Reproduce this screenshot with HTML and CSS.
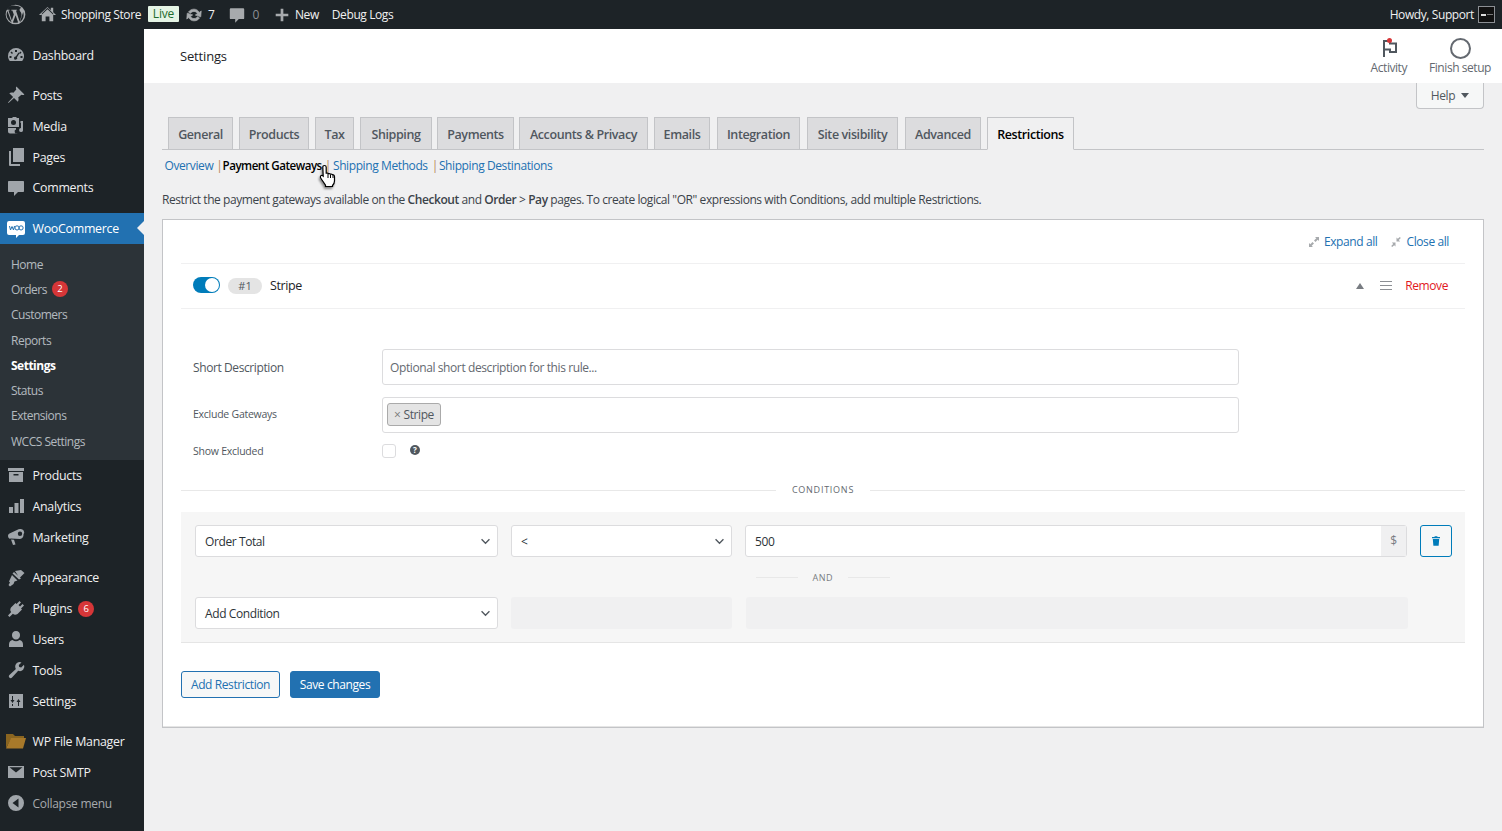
FILE: index.html
```html
<!DOCTYPE html>
<html lang="en">
<head>
<meta charset="utf-8">
<title>Settings</title>
<link rel="stylesheet" href="styles.css">
</head>
<body>
<header class="adminbar">
  <div class="bar-left">
    <svg class="bar-wp" viewBox="0 0 20 20"><path d="M10 .6a9.400 9.400 0 1 0 0 18.800A9.400 9.400 0 0 0 10 .6zm0 1a8.400 8.400 0 0 1 5.700 2.200c-1-.1-1.800.7-1.800 1.600 0 .9.500 1.500 1 2.300.4.700.8 1.500.8 2.700 0 .8-.3 1.800-.8 3.100l-1 3.200-3.500-10.500.9-.1c.5 0 .4-.7 0-.7l-2.600.1-2.500-.1c-.5 0-.5.700-.1.700l.9.100 1.400 3.700-1.900 5.700-3.200-9.400.9-.1c.5 0 .4-.7 0-.7l-2.400.1A8.400 8.400 0 0 1 10 1.600zM2.300 6.600l4 11A8.400 8.400 0 0 1 2.300 6.600zm7.800 4.200 2.400 6.700a8.400 8.400 0 0 1-5 .1zm7-3.700A8.400 8.400 0 0 1 14 17.400l2.500-7.300c.5-1.200.7-2.200.7-3z"/></svg>
    <svg class="bar-ic bar-home" viewBox="0 0 20 20"><path d="M16 9v8h-4v-5H8v5H4V9l6-6zm-6-7L1 10.500h2.600L10 4.500l6.400 6H19l-3-2.800V3h-2.500v2.400z"/></svg>
    <span class="bar-text">Shopping Store</span>
    <span class="live">Live</span>
    <svg class="bar-ic bar-update" viewBox="0 0 20 20"><path d="M10 3.500c2.600 0 4.800 1.500 5.900 3.700L18 5.500 17.500 12l-6-1.900 2.300-1.700C13 6.900 11.600 6 10 6 8.400 6 7 6.800 6.200 8.100L3.900 6.800C5.100 4.800 7.400 3.500 10 3.500zM2.500 8l6 1.900-2.300 1.700c.8 1.500 2.200 2.400 3.800 2.400 1.600 0 3-.8 3.800-2.100l2.300 1.300c-1.200 2-3.500 3.300-6.100 3.300-2.600 0-4.800-1.500-5.900-3.700L2 14.500z"/></svg>
    <span class="bar-text bar-count">7</span>
    <svg class="bar-ic bar-comment" viewBox="0 0 20 20"><path d="M3 2.500h14c.6 0 1 .4 1 1v10c0 .6-.4 1-1 1h-5l-4 4v-4H3c-.6 0-1-.4-1-1v-10c0-.6.4-1 1-1z"/></svg>
    <span class="bar-text bar-zero">0</span>
    <svg class="bar-ic bar-plus" viewBox="0 0 20 20"><path d="M8.500 3h3v5.500H17v3h-5.500V17h-3v-5.500H3v-3h5.500z"/></svg>
    <span class="bar-text bar-new">New</span>
    <span class="bar-text bar-debug">Debug Logs</span>
  </div>
  <div class="bar-right">
    <span class="bar-text">Howdy, Support</span>
    <span class="avatar"><span class="avatar-mark"></span><span class="avatar-line"></span></span>
  </div>
</header>

<div class="shell">
  <nav class="sidebar">
    <ul class="menu">
      <li class="item"><svg class="mi" viewBox="0 0 20 20"><path d="M10 3a8 8 0 0 0-8 8c0 1.900.7 3.700 1.800 5h12.400A8 8 0 0 0 10 3zM9 5h2v2H9zM5.500 6.500 7 8 6 9 4.500 7.500zm9 0 1 1L14 9l-1-1zM3.500 11h2v2h-2zm11 0h2v2h-2zM12.500 7.500l1 .7-2.500 4.100a1.600 1.600 0 1 1-1.200-.8z"/></svg>Dashboard</li>
      <li class="sep"></li>
      <li class="item"><svg class="mi" viewBox="0 0 20 20"><path d="M10.400 1.600 18.400 9.600c-1 .7-2.100.6-3 .1l-3.200 2.900c.6 1.500.5 3-.4 4.100L8 12.900 2.500 18l-.5-.5L7.100 12 3.300 8.200c1.100-.9 2.700-1 4.100-.4l2.900-3.200c-.5-.9-.6-2 .1-3z"/></svg>Posts</li>
      <li class="item"><svg class="mi" viewBox="0 0 20 20"><path d="M2 2h4l1-1h3l1 1h2v9H2zm5.500 2A2.500 2.500 0 1 0 7.500 9a2.500 2.500 0 0 0 0-5zM14.500 5H17v9.500a2 2 0 1 1-2-2.400V7h-.5zM2 12h8v1.500a2 2 0 1 0 1.500 4H4a2 2 0 0 1-2-2z"/></svg>Media</li>
      <li class="item"><svg class="mi" viewBox="0 0 20 20"><path d="M7 1h11v14H7zM5 4v13h9v2H4a1 1 0 0 1-1-1V4z"/></svg>Pages</li>
      <li class="item"><svg class="mi" viewBox="0 0 20 20"><path d="M3 3h14c.6 0 1 .4 1 1v9c0 .6-.4 1-1 1h-5l-4 4v-4H3c-.6 0-1-.4-1-1V4c0-.6.4-1 1-1z"/></svg>Comments</li>
      <li class="sep sep-w"></li>
      <li class="item current"><svg class="woo-logo" viewBox="0 0 18 18"><path class="woo-bubble" d="M2 1h14a2 2 0 0 1 2 2v10a2 2 0 0 1-2 2h-4l-3 3v-3H2a2 2 0 0 1-2-2V3a2 2 0 0 1 2-2z"/><path class="woo-mark" d="M2.500 6l1 4 1.500-3.500L6.500 10l1-4M10 5.800a2 2 0 1 0 .1 4.200 2 2 0 0 0-.1-4.200zM14 5.800a2 2 0 1 0 .1 4.200 2 2 0 0 0-.1-4.200z"/></svg>WooCommerce<span class="arrow"></span></li>
      <li class="sub">
        <ul class="submenu">
          <li class="sub-item">Home</li>
          <li class="sub-item">Orders<span class="badge">2</span></li>
          <li class="sub-item">Customers</li>
          <li class="sub-item">Reports</li>
          <li class="sub-item on">Settings</li>
          <li class="sub-item">Status</li>
          <li class="sub-item">Extensions</li>
          <li class="sub-item">WCCS Settings</li>
        </ul>
      </li>
      <li class="item"><svg class="mi" viewBox="0 0 20 20"><path d="M2 3h16v3H2zm1 4h14v10H3zm4.500 2v1.500h5V9z" fill-rule="evenodd"/></svg>Products</li>
      <li class="item"><svg class="mi" viewBox="0 0 20 20"><path d="M3 11h4v6H3zM8.500 7h4v10h-4zM14 3h4v14h-4z"/></svg>Analytics</li>
      <li class="item"><svg class="mi" viewBox="0 0 20 20"><path d="M14 2a3.500 3.500 0 0 1 3.500 5.500A4 4 0 0 1 14 12L5 11.500l-1.500.2A3 3 0 0 1 2 9c0-1 .5-1.900 1.500-2.400L11 3c1-.7 2-1 3-1zm0 2.500a2.200 2.200 0 1 0 0 4.400 2.200 2.200 0 0 0 0-4.400zM5 12.500l3 .3 1.500 4.700-2.500.5z"/></svg>Marketing</li>
      <li class="sep sep-w"></li>
      <li class="item"><svg class="mi" viewBox="0 0 20 20"><path d="M9 3l6-1 3.500 3-5 5zM8 4l7 6.500-2 1-6.500-6zM6 7l5.500 5.500-3 1-1 2.500-3.500 2.500-1.500-1.500L4 14.500l-1-1z"/></svg>Appearance</li>
      <li class="item"><svg class="mi" viewBox="0 0 20 20"><path d="M13.500 2 15 3.500 12.500 6 14 7.500 16.500 5 18 6.500 15 9.500l1 1-4.500 4.500c-1.700 1-3.300 1-4.600-.2L3.500 18 2 16.500l3.200-3.400C4 11.800 4 10.200 5 8.500L9.500 4l1 1z"/></svg>Plugins<span class="badge">6</span></li>
      <li class="item"><svg class="mi" viewBox="0 0 20 20"><path d="M10 2a4 4 0 0 1 4 4.500c0 2.300-1.700 4-4 4s-4-1.700-4-4A4 4 0 0 1 10 2zM6.500 11c1 .8 2.200 1.200 3.500 1.200s2.500-.4 3.500-1.200c2.200.5 3.500 2 3.500 4.500V18H3v-2.500c0-2.500 1.300-4 3.500-4.500z"/></svg>Users</li>
      <li class="item"><svg class="mi" viewBox="0 0 20 20"><path d="M13.500 2a4.500 4.500 0 0 1 2 .4L12.800 5l.4 2 2 .5L18 4.800a4.500 4.500 0 0 1-5.800 6L6 17.500a1.800 1.800 0 0 1-3.200-1.200c0-.5.200-1 .6-1.400l6.500-6A4.500 4.500 0 0 1 13.500 2z"/></svg>Tools</li>
      <li class="item"><svg class="mi" viewBox="0 0 20 20"><path d="M3 3h14v14H3zm3 2v4H4.500L6.500 12 8.500 9H7V5zm7 10v-4h1.500l-2-3-2 3H12v4zM6 13v2h1v-2z" fill-rule="evenodd"/></svg>Settings</li>
      <li class="sep sep-h"></li>
      <li class="item"><svg class="mi mi-folder" viewBox="0 0 22 20"><path class="folder-back" d="M1 3h7l2 2h9v3H6L1 17z"/><path class="folder-front" d="M6 7h15l-3 10.500H1z"/></svg>WP File Manager</li>
      <li class="item"><svg class="mi" viewBox="0 0 20 20"><path d="M2 4h16v12H2zm1.500 1.200L10 10.500l6.500-5.300z" fill-rule="evenodd"/></svg>Post SMTP</li>
      <li class="item collapse"><svg class="mi" viewBox="0 0 20 20"><path d="M10 2a8 8 0 1 1 0 16 8 8 0 0 1 0-16zm2.500 3.500L6.500 10l6 4.500z" fill-rule="evenodd"/></svg>Collapse menu</li>
    </ul>
  </nav>

  <main class="main">
    <div class="topbar">
      <h1 class="title">Settings</h1>
      <div class="top-actions">
        <div class="top-action">
          <span class="top-ic flag-wrap">
            <svg class="flag" viewBox="0 0 20 20"><path d="M5 19V3h6v2.500h6v8.500h-6v-2.500H5"/></svg>
            <span class="flag-dot"></span>
          </span>
          <span class="top-label">Activity</span>
        </div>
        <div class="top-action">
          <span class="top-ic"><span class="ring"></span></span>
          <span class="top-label">Finish setup</span>
        </div>
      </div>
    </div>

    <div class="content">
      <div class="help-row"><span class="help">Help<span class="caret"></span></span></div>

      <div class="tabs">
        <span class="tab t1">General</span>
        <span class="tab t2">Products</span>
        <span class="tab t3">Tax</span>
        <span class="tab t4">Shipping</span>
        <span class="tab t5">Payments</span>
        <span class="tab t6">Accounts &amp; Privacy</span>
        <span class="tab t7">Emails</span>
        <span class="tab t8">Integration</span>
        <span class="tab t9">Site visibility</span>
        <span class="tab t10">Advanced</span>
        <span class="tab active">Restrictions</span>
      </div>

      <div class="subnav">
        <a class="link">Overview</a><span class="pipe pipe-a">|</span><b class="cur">Payment Gateways</b><span class="pipe pipe-b">|</span><a class="link">Shipping Methods</a><span class="pipe pipe-c">|</span><a class="link">Shipping Destinations</a>
      </div>

      <p class="intro">Restrict the payment gateways available on the <b>Checkout</b> and <b>Order</b> &gt; <b>Pay</b> pages. To create logical "OR" expressions with Conditions, add multiple Restrictions.</p>

      <section class="panel">
        <div class="expand-row">
          <a class="link exp"><svg class="exp-ic" viewBox="0 0 10 10"><path d="M6 0h4v4L8.700 2.700 6.500 5 5 3.500l2.300-2.200zM4 10H0V6l1.300 1.300L3.500 5 5 6.500 2.700 8.700z"/></svg>Expand all</a>
          <a class="link exp"><svg class="exp-ic" viewBox="0 0 10 10"><path d="M5.500 4.500V.5l1.300 1.300L8.800 0l1 1-2 2 1.300 1.500zM4.500 5.500v4L3.200 8.200 1.200 10l-1-1 2-2L.9 5.500z"/></svg>Close all</a>
        </div>

        <div class="rule-head">
          <span class="toggle"><span class="knob"></span></span>
          <span class="pill">#1</span>
          <span class="rule-name">Stripe</span>
          <span class="rule-tools">
            <span class="tri"></span>
            <span class="burger"><i></i><i></i><i></i></span>
            <a class="remove">Remove</a>
          </span>
        </div>

        <div class="fields">
          <div class="field f-desc">
            <label class="lab lab-big">Short Description</label>
            <div class="input"><span class="ph">Optional short description for this rule...</span></div>
          </div>
          <div class="field f-ex">
            <label class="lab">Exclude Gateways</label>
            <div class="input input-tags"><span class="tag"><span class="tag-x">×</span>Stripe</span></div>
          </div>
          <div class="field f-show">
            <label class="lab">Show Excluded</label>
            <span class="check"></span>
            <span class="qmark">?</span>
          </div>
        </div>

        <div class="divider"><span class="div-line"></span><span class="div-text">CONDITIONS</span><span class="div-line"></span></div>

        <div class="conds">
          <div class="cond-row">
            <div class="sel sel-a"><span>Order Total</span><svg class="chev" viewBox="0 0 12 8"><path d="M1.500 1.500 6 6l4.500-4.500"/></svg></div>
            <div class="sel sel-b"><span>&lt;</span><svg class="chev" viewBox="0 0 12 8"><path d="M1.500 1.500 6 6l4.500-4.500"/></svg></div>
            <div class="amount"><span class="amount-val">500</span><span class="amount-unit">$</span></div>
            <button class="trash" type="button"><svg class="trash-ic" viewBox="0 0 10 12"><path d="M3.500 0h3l.5 1h3v1.500H0V1h3zM1 3.500h8L8.300 12H1.700z"/></svg></button>
          </div>
          <div class="and"><span class="and-line"></span><span class="and-text">AND</span><span class="and-line"></span></div>
          <div class="cond-row">
            <div class="sel sel-a"><span>Add Condition</span><svg class="chev" viewBox="0 0 12 8"><path d="M1.500 1.500 6 6l4.500-4.500"/></svg></div>
            <div class="blank blank-b"></div>
            <div class="blank blank-c"></div>
          </div>
        </div>

        <div class="actions">
          <button class="btn btn-out" type="button">Add Restriction</button>
          <button class="btn btn-pri" type="button">Save changes</button>
        </div>
      </section>
    </div>
  </main>
</div>

<svg class="cursor" viewBox="0 0 18 24"><path class="cursor-shape" d="M5.500 1.500c1 0 1.700.7 1.700 1.700v6l1-.1c.6 0 1 .2 1.300.6.800-.3 1.500-.1 1.900.4.800-.2 1.500 0 1.900.6.900-.2 2.200.4 2.200 2v4.300c0 2-1 3.500-2 4.500v1H6.500v-1.300L2 14.500c-1-1.300-.7-2.500.2-3 .8-.4 1.500 0 2 .5l-.4-8.700c0-1 .7-1.800 1.700-1.800z"/><path class="cursor-lines" d="M9 10v4M11.500 10.500V14M14 11v3"/></svg>
</body>
</html>
```

FILE: styles.css
```css
* { box-sizing: border-box; }
html, body { margin: 0; padding: 0; height: 831px; overflow: hidden; background: #f0f0f1; }
body { font-family: "Open Sans", "Noto Sans", sans-serif; font-size: 12px; color: #50575e; letter-spacing: -0.4px; position: relative; }
ul { list-style: none; margin: 0; padding: 0; }
a { text-decoration: none; }
button { font: inherit; letter-spacing: inherit; }

/* admin bar */
.adminbar { height: 29px; background: #1d2327; display: flex; justify-content: space-between; align-items: center; color: #f0f0f1; }
.bar-left, .bar-right { display: flex; align-items: center; height: 29px; }
.bar-text { color: #f0f0f1; font-size: 12px; }
.bar-wp { width: 21px; height: 21px; margin-left: 5px; fill: #a7aaad; }
.bar-ic { width: 18px; height: 18px; fill: #a7aaad; flex: none; }
.bar-home { margin-left: 12px; margin-right: 4px; width: 19px; height: 19px; }
.live { background: #e5f4e5; color: #1f6b2d; font-size: 12px; height: 16px; line-height: 15px; width: 31px; text-align: center; margin-left: 7px; border-radius: 1px; margin-top: -2px; letter-spacing: -0.2px; }
.bar-update { margin-left: 6px; width: 18px; height: 18px; stroke: #a7aaad; stroke-width: 0.8; }
.bar-count { margin-left: 5px; }
.bar-comment { margin-left: 14px; }
.bar-zero { margin-left: 6px; color: #8c8f94; }
.bar-plus { margin-left: 14px; }
.bar-new { margin-left: 4px; }
.bar-debug { margin-left: 13px; }
.bar-right { padding-right: 7px; }
.avatar { width: 17px; height: 17px; border: 1px solid #8c8f94; margin-left: 4px; background: #111; display: flex; align-items: center; gap: 1px; padding-left: 2px; }
.avatar-mark { width: 5px; height: 2px; background: #ddd; }
.avatar-line { width: 6px; height: 1px; background: #777; }

.shell { display: flex; height: 802px; }

/* sidebar */
.sidebar { width: 144px; flex: none; background: #1d2327; padding-top: 11px; color: #f0f0f1; }
.item { height: 30.850px; display: flex; align-items: center; font-size: 12.4px; letter-spacing: -0.28px; color: #f0f0f1; position: relative; padding-left: 6px; }
.sep { height: 9.200px; }
.sep-w { height: 9.800px; }
.sep-h { height: 9.500px; }
.mi { width: 20px; height: 20px; fill: #a0a5aa; margin-right: 6.500px; flex: none; }
.mi-folder { width: 22px; margin-left: -1px; margin-right: 5.500px; }
.folder-back { fill: #8a6520; }
.folder-front { fill: #a8792a; }
.current { background: #2271b1; color: #fff; }
.woo-logo { width: 18px; height: 18px; margin: 1px 7.500px 0 1px; flex: none; }
.woo-bubble { fill: #fff; }
.woo-mark { fill: none; stroke: #2271b1; stroke-width: 1; }
.arrow { position: absolute; right: 0; top: 8px; border: 7.500px solid transparent; border-right-color: #f0f0f1; border-left: 0; }
.submenu { background: #2c3338; padding: 7.500px 0 6.100px; }
.sub-item { height: 25.300px; display: flex; align-items: center; padding-left: 11px; font-size: 12px; letter-spacing: -0.5px; color: rgba(240, 246, 252, 0.7); }
.sub-item.on { color: #fff; font-weight: 700; letter-spacing: -0.5px; }
.badge { width: 16px; height: 16px; border-radius: 50%; background: #d63638; color: #fff; font-size: 9.500px; line-height: 16px; text-align: center; margin-left: 5px; letter-spacing: 0; }
.item .badge { margin-left: 6px; }
.collapse { color: #a7aaad; font-size: 12px; }

/* main */
.main { flex: 1; min-width: 0; display: flex; flex-direction: column; }
.topbar { height: 54px; background: #fff; display: flex; justify-content: space-between; padding-left: 36px; flex: none; }
.title { margin: 0; align-self: center; font-size: 13px; font-weight: 400; color: #1d2327; letter-spacing: -0.17px; }
.top-actions { display: flex; padding-right: 11px; gap: 22px; }
.top-action { display: flex; flex-direction: column; align-items: center; padding-top: 8px; }
.top-ic { height: 22px; width: 22px; position: relative; display: flex; align-items: center; justify-content: center; }
.flag { width: 20px; height: 20px; fill: none; stroke: #50575e; stroke-width: 2; }
.flag-dot { position: absolute; width: 5px; height: 5px; border-radius: 50%; background: #d63638; top: 1px; left: 9px; }
.ring { width: 21px; height: 21px; border: 2px solid #646970; border-radius: 50%; }
.top-label { font-size: 12px; letter-spacing: -0.44px; color: #646970; margin-top: 1px; line-height: 16px; }

.content { padding: 0 18px; flex: 1; }
.help-row { display: flex; justify-content: flex-end; height: 26px; }
.help { width: 68px; height: 26px; background: #f6f7f7; border: 1px solid #c3c4c7; border-top: 0; border-radius: 0 0 4px 4px; display: flex; align-items: center; justify-content: center; font-size: 12px; color: #50575e; }
.caret { border: 4px solid transparent; border-top: 5px solid #50575e; border-bottom: 0; margin-left: 6px; }

.tabs { margin-top: 8px; height: 33px; border-bottom: 1px solid #c3c4c7; display: flex; align-items: flex-end; padding-left: 6px; gap: 6px; }
.tab { height: 33px; margin-bottom: -1px; padding-top: 2px; border: 1px solid #c3c4c7; border-bottom: 1px solid #c3c4c7; background: #dcdcde; color: #50575e; font-weight: 600; font-size: 12.500px; letter-spacing: -0.4px; display: flex; align-items: center; justify-content: center; flex: none; }
.t1 { width: 65px; } .t2 { width: 70px; } .t3 { width: 39px; } .t4 { width: 72px; } .t5 { width: 77px; margin-left: -1px; }
.t6 { width: 129px; margin-left: -1px; } .t7 { width: 56px; } .t8 { width: 83px; margin-left: 1px; } .t9 { width: 91px; margin-left: 1px; } .t10 { width: 76px; margin-left: 1px; }
.active { width: 87px; background: #f0f0f1; border-bottom-color: #f0f0f1; color: #000; }

.subnav { margin-top: 7px; height: 18px; line-height: 18px; padding-left: 2.500px; font-size: 12px; display: flex; white-space: nowrap; }
.link { color: #2271b1; }
.pipe { color: #b8845a; }
.pipe-a { margin: 0 0 0 3px; }
.pipe-b { margin: 0 2px 0 3px; }
.pipe-c { margin: 0 1px 0 4px; }
.cur { color: #000; font-weight: 600; font-size: 11.600px; letter-spacing: -0.5px; }
.intro { margin: 16px 0 0; font-size: 12px; letter-spacing: -0.43px; line-height: 18px; color: #3c434a; white-space: nowrap; }
.intro b { font-weight: 600; }

.panel { margin-top: 10px; height: 509px; background: #fff; border: 1px solid #c3c4c7; padding: 0 18px; box-shadow: inset 0 -1px 0 #e5e5e5; }
.expand-row { height: 44px; display: flex; justify-content: flex-end; align-items: center; gap: 14px; padding: 0 16px 0 0; border-bottom: 1px solid #f0f0f1; font-size: 12px; letter-spacing: -0.4px; }
.exp { display: flex; align-items: center; }
.exp-ic { width: 10px; height: 10px; fill: #a7aaad; margin-right: 5px; }
.rule-head { height: 45px; display: flex; align-items: center; padding: 0 17px 2px 12px; border-bottom: 1px solid #f0f0f1; }
.toggle { width: 27px; height: 16px; border-radius: 8px; background: #007cba; position: relative; flex: none; }
.knob { position: absolute; right: 1px; top: 1px; width: 14px; height: 14px; background: #fff; border-radius: 50%; }
.pill { width: 34px; height: 16px; border-radius: 8px; background: #e4e4e4; margin-left: 8px; font-size: 11px; line-height: 16px; text-align: center; color: #50575e; letter-spacing: 0; margin-top: 2px; }
.rule-name { margin-left: 8px; font-size: 12.500px; color: #1d2327; margin-top: 1px; }
.rule-tools { margin-left: auto; display: flex; align-items: center; margin-top: 1px; }
.tri { border: 4px solid transparent; border-bottom: 6px solid #787c82; border-top: 0; }
.burger { width: 12px; margin-left: 16px; display: flex; flex-direction: column; gap: 2.500px; }
.burger i { display: block; height: 1.500px; background: #8c8f94; }
.remove { color: #e2181d; margin-left: 13px; font-size: 12px; }

.fields { padding: 40px 0 0 12px; }
.field { display: flex; align-items: center; }
.lab { width: 189px; font-size: 10.500px; letter-spacing: -0.25px; color: #50575e; flex: none; }
.lab-big { font-size: 12px; letter-spacing: -0.4px; }
.input { width: 857px; height: 36px; background: #fff; border: 1px solid #dcdcde; border-radius: 3px; display: flex; align-items: center; padding-left: 7px; font-size: 12px; }
.ph { color: #646970; }
.f-ex { margin-top: 12px; }
.f-ex .lab { margin-top: -2px; }
.input-tags { padding-left: 4px; }
.tag { height: 23px; background: #e4e4e4; border: 1px solid #aaa; border-radius: 3px; padding: 0 6px; display: flex; align-items: center; font-size: 12px; color: #50575e; margin-top: -1px; }
.tag-x { margin-right: 3px; color: #777; }
.f-show { margin-top: 11px; }
.check { width: 14px; height: 14px; border: 1px solid #dcdcde; border-radius: 3px; background: #fff; }
.qmark { width: 10px; height: 10px; border-radius: 50%; background: #50575e; color: #fff; font-size: 8px; font-weight: 700; line-height: 10px; text-align: center; margin-left: 14px; letter-spacing: 0; margin-top: -2px; }

.divider { display: flex; align-items: center; margin-top: 25px; height: 14px; }
.div-line { flex: 1; height: 1px; background: #e8e8e8; }
.div-text { font-size: 9px; letter-spacing: 0.750px; color: #646970; padding: 0 16px 2px; }

.conds { margin-top: 15px; height: 131px; background: #f6f6f6; border-bottom: 1px solid #e5e5e5; padding: 13px 14px 0; }
.cond-row { display: flex; gap: 13px; height: 32px; }
.sel { height: 32px; background: #fff; border: 1px solid #dcdcde; border-radius: 3px; display: flex; align-items: center; justify-content: space-between; padding: 0 6px 0 9px; font-size: 12px; color: #2c3338; flex: none; }
.sel-a { width: 303px; }
.sel-b { width: 221px; }
.chev { width: 11px; height: 7px; fill: none; stroke: #50575e; stroke-width: 1.500; }
.amount { width: 662px; height: 32px; flex: none; background: #fff; border: 1px solid #dcdcde; border-radius: 3px; display: flex; align-items: center; justify-content: space-between; font-size: 12px; color: #2c3338; }
.amount-val { padding-left: 9px; }
.amount-unit { width: 25px; height: 30px; line-height: 30px; background: #f0f0f1; text-align: center; color: #787c82; font-size: 12px; }
.trash { width: 32px; height: 32px; flex: none; padding: 0; border: 1px solid #007cba; border-radius: 3px; background: #f6f7f7; display: flex; align-items: center; justify-content: center; }
.trash-ic { width: 8px; height: 10px; fill: #007cba; }
.and { height: 40px; display: flex; align-items: center; justify-content: center; gap: 15px; margin-top: 0; padding-right: 1px; }
.and-line { width: 42px; height: 1px; background: #e8e8e8; }
.and-text { font-size: 9px; letter-spacing: 0.500px; color: #787c82; width: 20px; text-align: center; }
.blank { height: 32px; background: #f0f0f1; border-radius: 3px; flex: none; }
.blank-b { width: 221px; }
.blank-c { width: 662px; margin-left: 1px; }

.actions { display: flex; gap: 10px; margin-top: 28px; }
.btn { height: 27px; border-radius: 3px; font-size: 12px; padding: 0; }
.btn-out { width: 99px; background: #f6f7f7; border: 1px solid #2271b1; color: #2271b1; }
.btn-pri { width: 90px; background: #2271b1; border: 1px solid #2271b1; color: #fff; }

/* mouse pointer lying over the page */
.cursor { position: absolute; left: 319px; top: 164px; width: 18px; height: 24px; filter: drop-shadow(-1px 2px 1px rgba(0,0,0,.45)); }
.cursor-shape { fill: #fff; stroke: #000; stroke-width: 1.200; }
.cursor-lines { stroke: #000; stroke-width: 1; fill: none; }
```
